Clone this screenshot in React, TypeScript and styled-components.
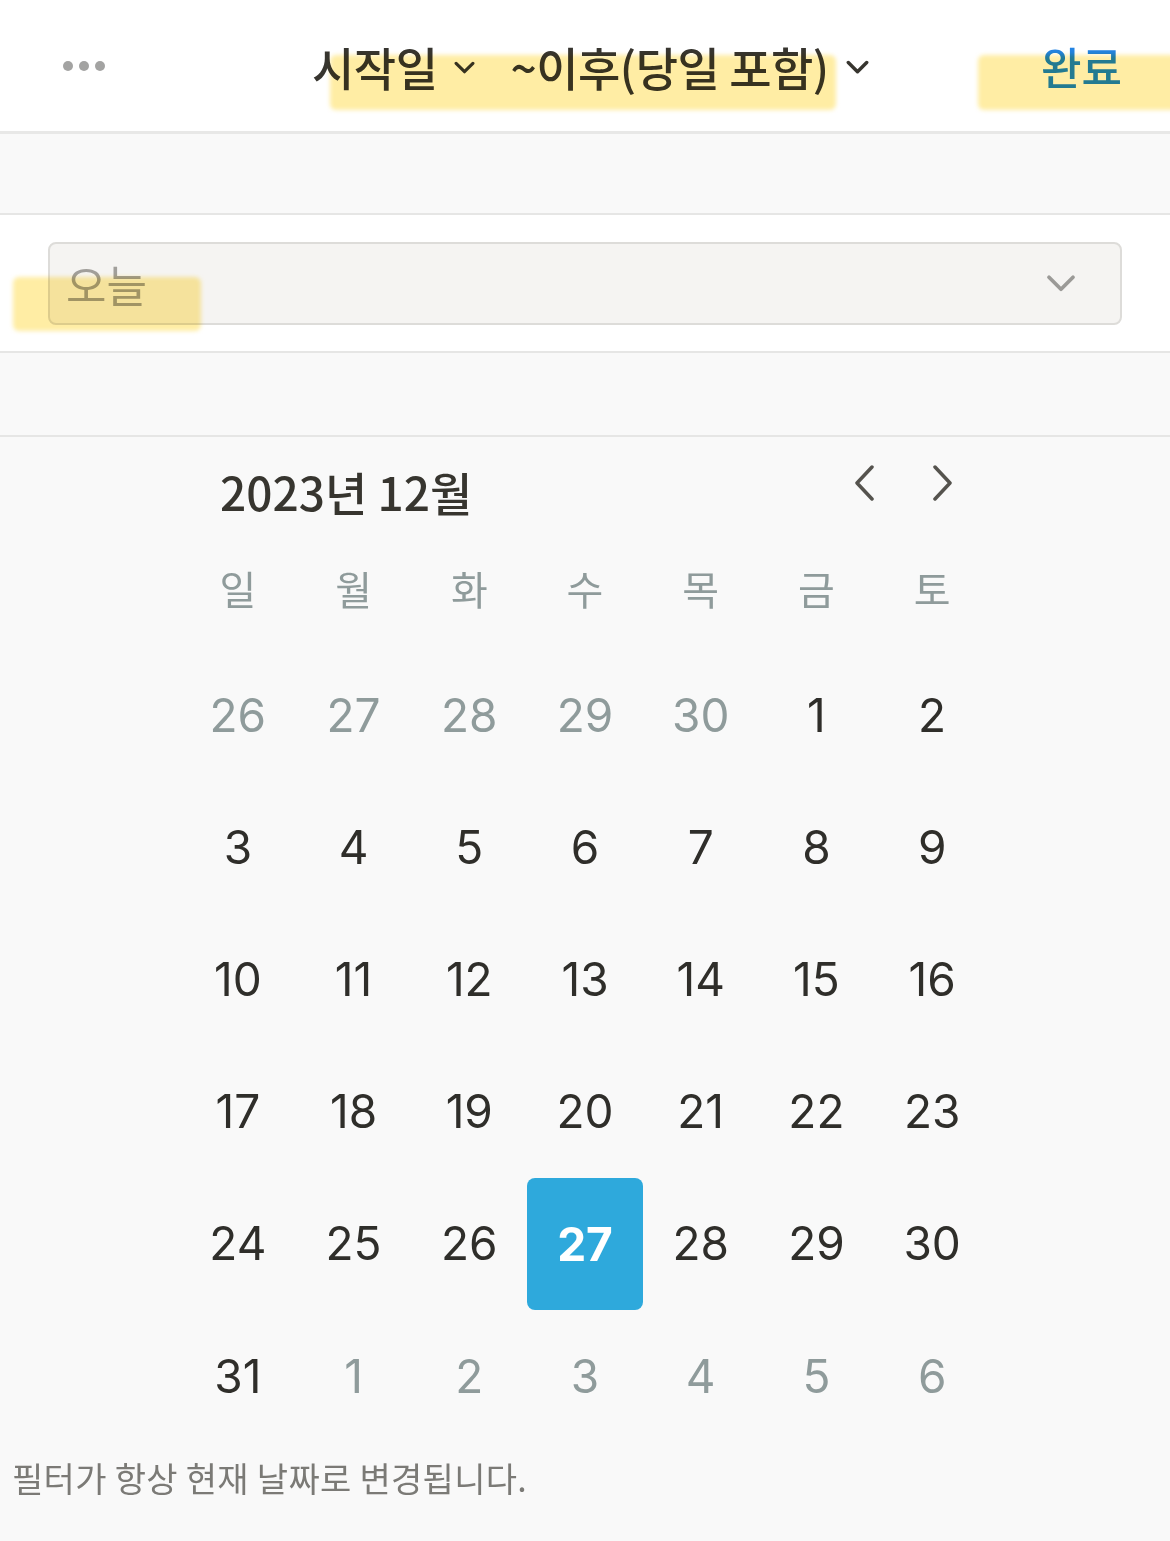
import { FC } from 'react'
import styled, { createGlobalStyle } from 'styled-components'

const GlobalStyle = createGlobalStyle`
  * { box-sizing: border-box; }
  body {
    margin: 0;
    background: #f9f9f9;
    font-family: "Noto Sans CJK KR", "Noto Sans", sans-serif;
    color: #37352f;
  }
`

const Page = styled.div`
  position: relative;
  width: 1170px;
  min-height: 1541px;
  background: #f9f9f9;
  overflow: hidden;
`

const Header = styled.header`
  height: 134px;
  background: #fff;
  border-bottom: 3px solid #e8e8e7;
  display: flex;
  align-items: center;
  padding: 0 50px 0 63px;
`

const Dots = styled.div`
  display: flex;
  gap: 6px;
  width: 42px;

  span {
    width: 10px;
    height: 10px;
    border-radius: 50%;
    background: #a3a3a2;
  }
`

const Title = styled.div`
  margin-left: 207px;
  display: flex;
  align-items: center;
  font-size: 46px;
  font-weight: 500;
  color: #37352f;
  line-height: 1;
  letter-spacing: -0.5px;
`

const TitlePart = styled.span<{ gap: number }>`
  display: flex;
  align-items: center;
  margin-right: ${({ gap }) => gap}px;

  svg {
    margin-left: 17px;
    margin-top: 4px;
  }
`

const Done = styled.button`
  margin-left: auto;
  border: none;
  background: none;
  padding: 0;
  font-family: inherit;
  font-size: 44px;
  font-weight: 500;
  color: #2383e2;
  margin-right: -2px;
`

const Band = styled.div<{ h: number }>`
  height: ${({ h }) => h}px;
  background: #f9f9f9;
  border-bottom: 2px solid #e6e6e5;
`

const SelectSection = styled.div`
  background: #fff;
  padding: 27px 48px 26px 48px;
  border-bottom: 2px solid #e6e6e5;
`

const Select = styled.div`
  height: 83px;
  background: #f5f4f2;
  border: 2px solid #dddcd9;
  border-radius: 8px;
  display: flex;
  align-items: center;
  padding: 0 44px 0 16px;
  font-size: 44px;
  color: #a19f9b;

  svg {
    margin-left: auto;
  }
`

const Calendar = styled.section`
  background: #f9f9f9;
`

const CalHead = styled.div`
  width: 810px;
  margin-left: 180px;
  height: 106px;
  display: flex;
  align-items: center;
  padding: 0 35px 0 40px;
`

const MonthLabel = styled.div`
  font-size: 46px;
  font-weight: 500;
  color: #37352f;
  margin-top: 2px;
`

const Arrows = styled.div`
  margin-left: auto;
  display: flex;
  gap: 55px;
  margin-top: -14px;
`

const Grid = styled.div`
  width: 810px;
  margin-left: 180px;
  display: grid;
  grid-template-columns: repeat(7, 1fr);
`

const WeekDay = styled.div`
  height: 106px;
  display: flex;
  align-items: center;
  justify-content: center;
  padding-bottom: 16px;
  font-size: 40px;
  color: #8f9b9b;
`

const Day = styled.div<{ muted?: boolean; selected?: boolean }>`
  height: 132px;
  display: flex;
  align-items: center;
  justify-content: center;
  font-family: Inter, "Noto Sans CJK KR", sans-serif;
  font-size: 46px;
  font-weight: ${({ selected }) => (selected ? 700 : 400)};
  color: ${({ muted, selected }) => (selected ? '#fff' : muted ? '#8f9b9b' : '#2f2e2a')};
  background: ${({ selected }) => (selected ? '#2ea9dc' : 'transparent')};
  border-radius: 8px;
  margin: ${({ selected }) => (selected ? '1px 0 0' : '0')};
`

const Footer = styled.div`
  height: 70px;
  padding-left: 12px;
  display: flex;
  align-items: center;
  font-size: 34px;
  color: #7b7a76;
  letter-spacing: 0.3px;
`

const Highlight = styled.div<{ x: number; y: number; w: number; h: number }>`
  position: absolute;
  left: ${({ x }) => x}px;
  top: ${({ y }) => y}px;
  width: ${({ w }) => w}px;
  height: ${({ h }) => h}px;
  background: rgba(255, 222, 90, 0.55);
  mix-blend-mode: multiply;
  border-radius: 6px;
  filter: blur(2px);
  pointer-events: none;
`

const Chevron: FC<{ size: number; color: string; width?: number }> = ({ size, color, width = 3 }) => (
  <svg width={size} height={size * 0.62} viewBox="0 0 20 12" fill="none">
    <path d="M2 2 L10 10 L18 2" stroke={color} strokeWidth={width} strokeLinecap="round" strokeLinejoin="round" />
  </svg>
)

const Arrow: FC<{ dir: 'left' | 'right' }> = ({ dir }) => (
  <svg width="24" height="36" viewBox="0 0 24 36" fill="none">
    <path
      d={dir === 'left' ? 'M20 2 L5 18 L20 34' : 'M4 2 L19 18 L4 34'}
      stroke="#55534e"
      strokeWidth="3.5"
      strokeLinecap="round"
      strokeLinejoin="round"
    />
  </svg>
)

const weekDays = ['일', '월', '화', '수', '목', '금', '토']

const days: { n: number; muted?: boolean }[] = [
  ...[26, 27, 28, 29, 30].map((n) => ({ n, muted: true })),
  ...Array.from({ length: 31 }, (_, i) => ({ n: i + 1 })),
  ...[1, 2, 3, 4, 5, 6].map((n) => ({ n, muted: true })),
]

const App: FC = () => {
  return (
    <Page>
      <GlobalStyle />
      <Header>
        <Dots>
          <span />
          <span />
          <span />
        </Dots>
        <Title>
          <TitlePart gap={35}>
            시작일
            <Chevron size={21} color="#37352f" />
          </TitlePart>
          <TitlePart gap={0}>
            ~이후(당일 포함)
            <Chevron size={23} color="#37352f" />
          </TitlePart>
        </Title>
        <Done>완료</Done>
      </Header>
      <Band h={81} />
      <SelectSection>
        <Select>
          오늘
          <Chevron size={30} color="#9b9a97" width={2.5} />
        </Select>
      </SelectSection>
      <Band h={84} />
      <Calendar>
        <CalHead>
          <MonthLabel>2023년 12월</MonthLabel>
          <Arrows>
            <Arrow dir="left" />
            <Arrow dir="right" />
          </Arrows>
        </CalHead>
        <Grid>
          {weekDays.map((w) => (
            <WeekDay key={w}>{w}</WeekDay>
          ))}
          {days.map((d, i) => (
            <Day key={i} muted={d.muted} selected={!d.muted && d.n === 27}>
              {d.n}
            </Day>
          ))}
        </Grid>
        <Footer>필터가 항상 현재 날짜로 변경됩니다.</Footer>
      </Calendar>
      <Highlight x={330} y={55} w={506} h={55} />
      <Highlight x={978} y={55} w={200} h={55} />
      <Highlight x={13} y={277} w={188} h={54} />
    </Page>
  )
}

export default App
